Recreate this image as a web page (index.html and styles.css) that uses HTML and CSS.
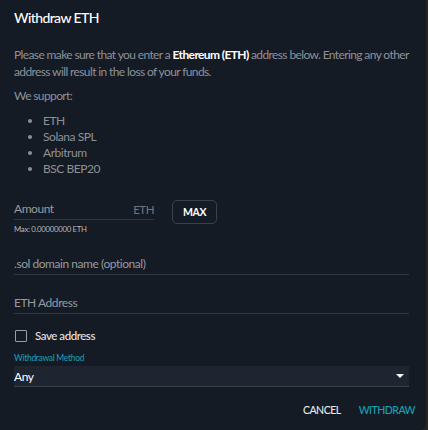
FILE: index.html
```html
<!DOCTYPE html>
<html>
<head>
<meta charset="utf-8">
<link rel="stylesheet" href="styles.css">
</head>
<body>
<div class="dialog">
  <h1 class="title">Withdraw ETH</h1>
  <p class="note">Please make sure that you enter a <b>Ethereum (ETH)</b> address below. Entering any other address will result in the loss of your funds.</p>
  <p class="note support">We support:</p>
  <ul class="chains">
    <li>ETH</li>
    <li>Solana SPL</li>
    <li>Arbitrum</li>
    <li>BSC BEP20</li>
  </ul>
  <div class="amount-row">
    <div class="amount-col">
      <div class="field short">
        <span class="ph">Amount</span>
        <span class="unit">ETH</span>
      </div>
      <div class="max-note">Max: 0.00000000 ETH</div>
    </div>
    <button class="max-btn">MAX</button>
  </div>
  <div class="field wide sol"><span class="ph">.sol domain name (optional)</span></div>
  <div class="field wide addr"><span class="ph">ETH Address</span></div>
  <label class="check"><span class="box"></span><span>Save address</span></label>
  <div class="method-label">Withdrawal Method</div>
  <div class="select"><span>Any</span><span class="caret"></span></div>
  <div class="actions">
    <button class="btn cancel">CANCEL</button>
    <button class="btn withdraw">WITHDRAW</button>
  </div>
</div>
</body>
</html>
```
FILE: styles.css
```css
* { box-sizing: border-box; }
html, body { margin: 0; padding: 0; }
body {
  background: #2a2320;
  width: 428px;
  height: 430px;
  overflow: hidden;
  font-family: Lato, "Open Sans", sans-serif;
}
.dialog {
  width: 426px;
  height: 430px;
  background: #151b24;
  border-radius: 0 0 6px 0;
  padding: 9px 14px 0 14px;
  color: #8e949c;
  letter-spacing: -0.45px;
}
.title {
  margin: 0;
  font-size: 14px;
  font-weight: 500;
  color: #ffffff;
  line-height: 18px;
  letter-spacing: -0.6px;
}
.note {
  margin: 19px 0 0 0;
  font-size: 12px;
  line-height: 17px;
  color: #8c9199;
  letter-spacing: -0.62px;
}
.note b { color: #ffffff; font-weight: 700; }
.note.support { margin-top: 7px; }
.chains {
  margin: 9px 0 0 0;
  padding: 0 0 0 29px;
  font-size: 12px;
  line-height: 16px;
  color: #8c9199;
}
.chains li::marker { color: #8c9199; }
.amount-row {
  display: flex;
  align-items: flex-start;
  margin-top: 23px;
}
.amount-col { width: 140px; }
.field {
  display: flex;
  justify-content: space-between;
  align-items: flex-end;
  border-bottom: 1px solid #313842;
  font-size: 12px;
  color: #8c9199;
  padding-bottom: 3px;
  height: 20px;
}
.field .ph { color: #959aa1; }
.field .unit { color: #6f757d; font-size: 11.5px; }
.max-note {
  font-size: 7.8px;
  color: #b4b8bd;
  margin-top: 4px;
  letter-spacing: -0.3px;
}
.max-btn {
  margin-left: 18px;
  margin-top: 0;
  width: 45px;
  height: 24px;
  border: 1px solid #3a414b;
  border-radius: 5px;
  background: transparent;
  color: #ffffff;
  font-family: Lato, "Open Sans", sans-serif;
  font-size: 10.5px;
  font-weight: 700;
  letter-spacing: -0.4px;
  padding: 0;
}
.field.wide { width: 395px; }
.sol { margin-top: 21px; }
.addr { margin-top: 19px; }
.check {
  display: flex;
  align-items: center;
  gap: 8px;
  margin-top: 15px;
  margin-left: 1px;
  font-size: 11.5px;
  color: #e2e4e6;
  font-weight: 500;
}
.box {
  width: 12px;
  height: 12px;
  border: 1.5px solid #9a9fa5;
  border-radius: 1px;
}
.method-label {
  margin-top: 11px;
  font-size: 8.5px;
  color: #17a2b8;
  line-height: 10px;
  letter-spacing: -0.3px;
}
.select {
  margin-top: 3px;
  width: 395px;
  height: 21px;
  background: #1e2530;
  border-bottom: 1px solid #3a414b;
  display: flex;
  align-items: center;
  justify-content: space-between;
  padding: 0 5px 0 0;
  color: #ffffff;
  font-size: 12px;
}
.caret {
  width: 0; height: 0;
  border-left: 4px solid transparent;
  border-right: 4px solid transparent;
  border-top: 4px solid #ffffff;
}
.actions {
  display: flex;
  justify-content: flex-end;
  gap: 18px;
  margin-top: 17px;
  margin-right: -3px;
}
.btn {
  background: transparent;
  border: none;
  padding: 0;
  font-family: Lato, "Open Sans", sans-serif;
  font-size: 10.5px;
  font-weight: 500;
  letter-spacing: -0.5px;
}
.cancel { color: #e6e8ea; }
.withdraw { color: #17a2b8; }
```
